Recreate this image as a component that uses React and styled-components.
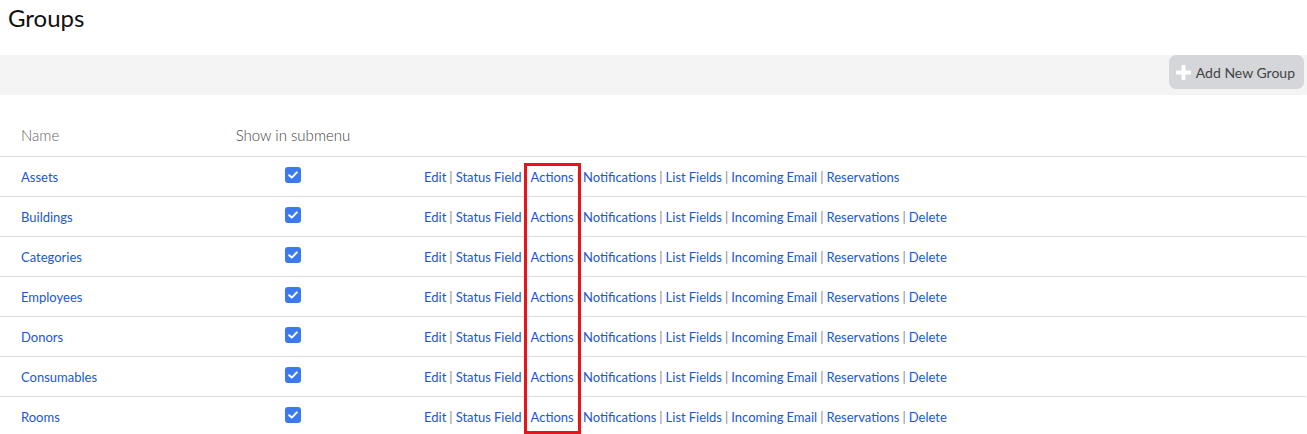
import React from 'react'
import styled, { createGlobalStyle } from 'styled-components'

const GlobalStyle = createGlobalStyle`
  body {
    margin: 0;
    background: #fff;
    font-family: Lato, "Open Sans", sans-serif;
  }
`

const groups = [
  { name: 'Assets', canDelete: false },
  { name: 'Buildings', canDelete: true },
  { name: 'Categories', canDelete: true },
  { name: 'Employees', canDelete: true },
  { name: 'Donors', canDelete: true },
  { name: 'Consumables', canDelete: true },
  { name: 'Rooms', canDelete: true },
]

const baseLinks = ['Edit', 'Status Field', 'Actions', 'Notifications', 'List Fields', 'Incoming Email', 'Reservations']

export default function App() {
  return (
    <Page>
      <GlobalStyle />
      <Title>Groups</Title>
      <Toolbar>
        <AddButton type='button'>
          <svg width='15' height='15' viewBox='0 0 15 15'>
            <rect x='5.5' y='0' width='4' height='15' rx='1' fill='#fff' />
            <rect x='0' y='5.5' width='15' height='4' rx='1' fill='#fff' />
          </svg>
          Add New Group
        </AddButton>
      </Toolbar>
      <Table>
        <HeadRow>
          <HeadCell>Name</HeadCell>
          <HeadCell center>Show in submenu</HeadCell>
          <HeadCell />
        </HeadRow>
        {groups.map((g) => {
          const links = g.canDelete ? [...baseLinks, 'Delete'] : baseLinks
          return (
            <Row key={g.name}>
              <NameCell><Link href='#'>{g.name}</Link></NameCell>
              <CheckCell>
                <Check>
                  <svg width='10' height='8' viewBox='0 0 10 8'>
                    <path d='M1.2 4.2 L3.8 6.6 L8.8 1.4' stroke='#fff' strokeWidth='2' fill='none' strokeLinecap='round' strokeLinejoin='round' />
                  </svg>
                </Check>
              </CheckCell>
              <LinksCell>
                {links.map((l, i) => (
                  <React.Fragment key={l}>
                    {i > 0 && <Sep> | </Sep>}
                    <Link href='#'>{l}</Link>
                  </React.Fragment>
                ))}
              </LinksCell>
            </Row>
          )
        })}
        <Highlight />
      </Table>
    </Page>
  )
}

const Page = styled.div`
  width: 1307px;
  height: 434px;
  overflow: hidden;
`

const Title = styled.h1`
  margin: 0;
  height: 55px;
  box-sizing: border-box;
  padding: 3px 8px 0;
  font-size: 24px;
  font-weight: 400;
  line-height: 30px;
  color: #111;
`

const Toolbar = styled.div`
  height: 40px;
  background: #f4f4f4;
  display: flex;
  justify-content: flex-end;
  align-items: flex-start;
  padding-right: 3px;
`

const AddButton = styled.button`
  display: flex;
  align-items: center;
  gap: 5px;
  height: 34px;
  padding: 0 9px 0 7px;
  border: none;
  border-radius: 7px;
  background: #d5d6da;
  color: #444;
  font-family: Lato, sans-serif;
  font-size: 14px;
`

const Table = styled.div`
  position: relative;
`

const HeadRow = styled.div`
  display: grid;
  grid-template-columns: 234px 118px 1fr;
  height: 62px;
  align-items: end;
  border-bottom: 1px solid #dcdcdc;
  box-sizing: border-box;
  margin-right: 1px;
`

const HeadCell = styled.div`
  padding-bottom: 12px;
  padding-left: ${(p) => (p.center ? '0' : '21px')};
  text-align: ${(p) => (p.center ? 'center' : 'left')};
  font-size: 15px;
  font-weight: 300;
  color: ${(p) => (p.center ? '#444' : '#666')};
  white-space: nowrap;
`

const Row = styled.div`
  display: grid;
  grid-template-columns: 234px 118px 1fr;
  height: 40px;
  align-items: center;
  border-bottom: 1px solid #dcdcdc;
  box-sizing: border-box;
  font-size: 13px;
  margin-right: 1px;
`

const NameCell = styled.div`
  padding-left: 21px;
  padding-top: 1px;
`

const CheckCell = styled.div`
  display: flex;
  justify-content: center;
  padding-bottom: 4px;
`

const Check = styled.span`
  width: 16px;
  height: 16px;
  border-radius: 3px;
  background: #3b79ef;
  display: flex;
  align-items: center;
  justify-content: center;
`

const LinksCell = styled.div`
  padding-left: 72px;
  padding-top: 1px;
  white-space: nowrap;
  word-spacing: -0.3px;
`

const Link = styled.a`
  color: #2157d3;
  text-decoration: none;
`

const Sep = styled.span`
  color: #8a8a8a;
  white-space: pre;
`

const Highlight = styled.div`
  position: absolute;
  left: 524px;
  top: 68px;
  width: 57px;
  height: 271px;
  box-sizing: border-box;
  border: 3px solid #e8141c;
  pointer-events: none;
`
